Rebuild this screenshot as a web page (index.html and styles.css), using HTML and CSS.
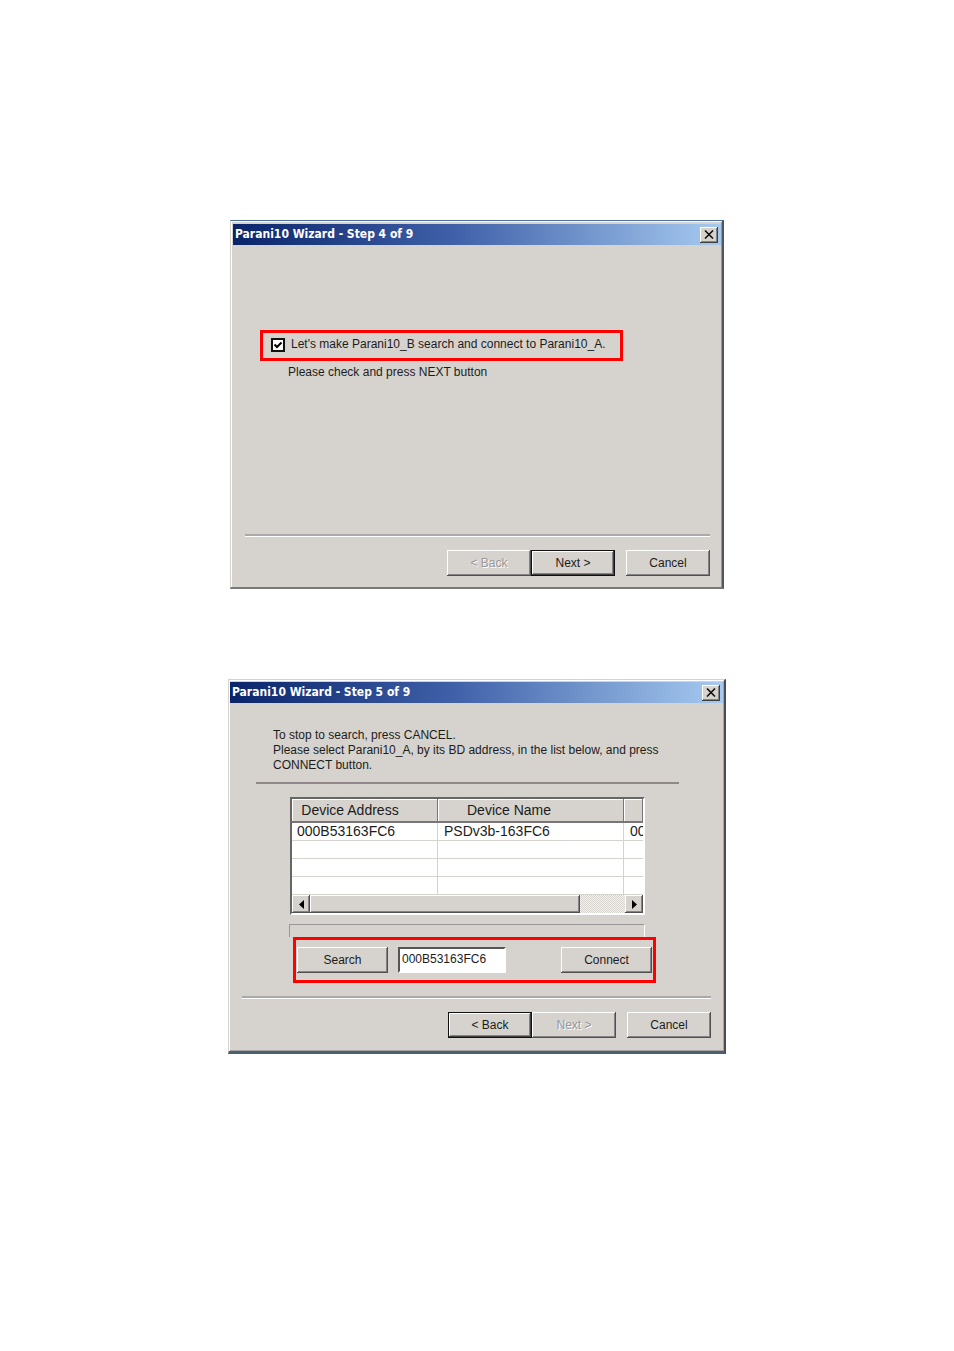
FILE: index.html
```html
<!DOCTYPE html>
<html lang="en">
<head>
  <meta charset="UTF-8">
  <meta name="viewport" content="width=device-width, initial-scale=1.0">
  <title>Parani10 Wizard</title>
  <link rel="stylesheet" href="styles.css">
</head>
<body>
  <main class="page">
    <section class="dialog dialog-step4">
      <header class="title-bar">
        <h2>Parani10 Wizard - Step 4 of 9</h2>
        <button class="close" aria-label="Close">
          <svg width="10" height="9" viewBox="0 0 10 9"><path d="M1 0.5 L9 8.5 M9 0.5 L1 8.5" stroke="#111" stroke-width="1.6" fill="none"/></svg>
        </button>
      </header>
      <div class="dialog-body">
        <label class="highlight check-row">
          <input type="checkbox" checked>
          <span>Let's make Parani10_B search and connect to Parani10_A.</span>
        </label>
        <p class="message">Please check and press NEXT button</p>
      </div>
      <footer class="dialog-footer">
        <button class="btn" disabled>&lt; Back</button>
        <button class="btn default">Next &gt;</button>
        <button class="btn cancel">Cancel</button>
      </footer>
    </section>

    <section class="dialog dialog-step5">
      <header class="title-bar">
        <h2>Parani10 Wizard - Step 5 of 9</h2>
        <button class="close" aria-label="Close">
          <svg width="10" height="9" viewBox="0 0 10 9"><path d="M1 0.5 L9 8.5 M9 0.5 L1 8.5" stroke="#111" stroke-width="1.6" fill="none"/></svg>
        </button>
      </header>
      <div class="dialog-body">
        <p class="message">To stop to search, press CANCEL.<br>Please select Parani10_A, by its BD address, in the list below, and press<br>CONNECT button.</p>
        <hr class="divider">
        <div class="device-list">
          <table>
            <colgroup>
              <col class="col-address">
              <col class="col-name">
              <col>
            </colgroup>
            <thead>
              <tr><th>Device Address</th><th>Device Name</th><th></th></tr>
            </thead>
            <tbody>
              <tr><td>000B53163FC6</td><td>PSDv3b-163FC6</td><td>00</td></tr>
              <tr><td></td><td></td><td></td></tr>
              <tr><td></td><td></td><td></td></tr>
              <tr><td></td><td></td><td></td></tr>
            </tbody>
          </table>
          <div class="scrollbar">
            <button class="arrow" aria-label="Scroll left">
              <svg width="5" height="9" viewBox="0 0 5 9"><path d="M5 0 V9 L0 4.5 Z"/></svg>
            </button>
            <div class="thumb"></div>
            <button class="arrow" aria-label="Scroll right">
              <svg width="5" height="9" viewBox="0 0 5 9"><path d="M0 0 V9 L5 4.5 Z"/></svg>
            </button>
          </div>
        </div>
        <div class="progress"></div>
        <div class="highlight connect-row">
          <button class="btn wide">Search</button>
          <input type="text" value="000B53163FC6" aria-label="Device address">
          <button class="btn wide connect">Connect</button>
        </div>
      </div>
      <footer class="dialog-footer">
        <button class="btn default">&lt; Back</button>
        <button class="btn" disabled>Next &gt;</button>
        <button class="btn cancel">Cancel</button>
      </footer>
    </section>
  </main>
</body>
</html>
```
FILE: styles.css
```css
* {
  box-sizing: border-box;
}

body {
  margin: 0;
  background: #fff;
  font-family: "Liberation Sans", Arial, sans-serif;
  font-size: 12px;
  line-height: 15px;
  color: #1c1c1c;
}

.page {
  display: flex;
  flex-direction: column;
  gap: 90px;
  padding: 220px 228px;
}

/* Dialog windows */
.dialog {
  background: #d6d3ce;
  border: 1px solid #d6d3ce;
}

.dialog-step4 {
  margin: 0 2px;
  padding: 3px 1px 0 2px;
  border-top-color: #47709f;
  border-right: 2px solid #55555c;
  border-bottom: 2px solid #77777a;
  box-shadow: inset 1px 1px #fff, inset -1px 0 #96949a;
}

.dialog-step5 {
  padding: 2px 1px 0 1px;
  border-right: 2px solid #4c4c55;
  border-bottom: 3px solid #4c5f6c;
  box-shadow: inset 1px 1px #fff, inset -1px -1px #a5a3a3;
}

.title-bar {
  display: flex;
  align-items: center;
  justify-content: space-between;
  height: 21px;
  padding: 0 3px 0 2px;
  background: linear-gradient(to right, #0a246a, #3f60a8 45%, #a6caf0);
}

.title-bar h2 {
  margin: 0;
  font-family: "DejaVu Sans Condensed", "DejaVu Sans", sans-serif;
  font-size: 12px;
  font-weight: bold;
  color: #fff;
}

/* Buttons */
button {
  padding: 0;
  border: 0;
  background: #d6d3ce;
  font: inherit;
  color: inherit;
}

.close {
  display: flex;
  align-items: center;
  justify-content: center;
  width: 18px;
  height: 16px;
  box-shadow: inset -1px -1px #404040, inset 1px 1px #fff, inset -2px -2px #848284;
}

.btn {
  width: 84px;
  height: 26px;
  box-shadow: inset -1px -1px #505050, inset 1px 1px #fff, inset -2px -2px #848284;
}

.btn:disabled {
  color: #99979a;
  text-shadow: 1px 1px #fff;
}

.btn.default {
  border: 1px solid #111;
  box-shadow: inset -1px -1px #404040, inset 1px 1px #fff, inset -2px -2px #848284;
}

.btn.wide {
  width: 91px;
}

.btn.cancel {
  margin-left: 11px;
}

.dialog-footer {
  display: flex;
  justify-content: flex-end;
  margin: 0 12px;
  padding: 14px 0 11px;
  border-top: 2px solid #aaa8a8;
  box-shadow: inset 0 1px #fff;
}

.dialog-step4 .dialog-footer {
  margin-right: 11px;
}

.dialog-step5 .dialog-footer {
  padding-bottom: 13px;
}

/* Step 4 */
.dialog-step4 .dialog-body {
  padding: 85px 98px 154px 27px;
}

.highlight {
  display: flex;
  align-items: center;
  border: 3px solid #f00;
}

.check-row {
  gap: 6px;
  height: 31px;
  padding: 0 8px 2px;
}

.check-row input {
  appearance: none;
  width: 14px;
  height: 14px;
  margin: 0;
  border: 2px solid #111;
  background: #fff url("data:image/svg+xml,%3Csvg xmlns='http://www.w3.org/2000/svg' viewBox='0 0 10 10'%3E%3Cpath d='M1.5 4.5 L4 7 L8.5 2.5' fill='none' stroke='black' stroke-width='2'/%3E%3C/svg%3E") center / 10px 10px no-repeat;
}

.message {
  margin: 0;
}

.dialog-step4 .message {
  margin: 4px 0 0 28px;
}

/* Step 5 */
.dialog-step5 .dialog-body {
  padding: 25px 44px 13px 26px;
}

.dialog-step5 .message {
  margin-left: 17px;
}

.divider {
  height: 2px;
  margin: 9px 0 13px;
  border: 0;
  background: #918889;
}

.device-list {
  margin: 0 34px;
  border: 2px solid #fff;
  border-top-color: #666;
  border-left-color: #666;
  background: #fff;
  overflow: hidden;
}

.device-list table {
  width: 100%;
  table-layout: fixed;
  border-collapse: separate;
  border-spacing: 0;
  font-size: 14px;
}

.col-address {
  width: 146px;
}

.col-name {
  width: 186px;
}

.device-list th {
  height: 24px;
  padding: 0 44px 2px 0;
  background: #d6d3ce;
  box-shadow: inset -1px -2px #77757a, inset 1px 1px #fff;
  font-weight: normal;
}

.device-list th:first-child {
  padding-right: 30px;
}

.device-list th:last-child {
  padding: 0;
}

.device-list td {
  height: 18px;
  padding: 0 5px;
  border-right: 1px solid #d6d3ce;
  border-bottom: 1px solid #d6d3ce;
  overflow: hidden;
  white-space: nowrap;
}

.device-list td + td {
  padding: 0 6px;
}

.device-list td:last-child {
  padding-right: 0;
  border-right: 0;
}

.scrollbar {
  display: flex;
  justify-content: space-between;
  height: 18px;
  background: repeating-conic-gradient(#d6d3ce 0 25%, #f4f3f1 0 50%) 0 0 / 2px 2px;
}

.arrow {
  display: flex;
  align-items: center;
  justify-content: center;
  width: 18px;
}

.arrow,
.thumb {
  background: #d6d3ce;
  box-shadow: inset -1px -1px #505050, inset 1px 1px #fff, inset -2px -2px #848284;
}

.thumb {
  flex: 1;
  margin-right: 45px;
}

.progress {
  height: 13px;
  margin: 9px 34px 0 33px;
  border: 1px solid #999698;
  border-right-color: #fff;
  border-bottom: 0;
}

.connect-row {
  height: 46px;
  margin: 0 23px 0 37px;
  padding: 0 1px;
}

.connect-row input {
  width: 108px;
  height: 26px;
  margin-left: 10px;
  padding: 0 2px 3px;
  border: 2px solid #fff;
  border-top-color: #555;
  border-left-color: #555;
  background: #fff;
  font: inherit;
  color: inherit;
}

.connect {
  margin-left: auto;
}
```
